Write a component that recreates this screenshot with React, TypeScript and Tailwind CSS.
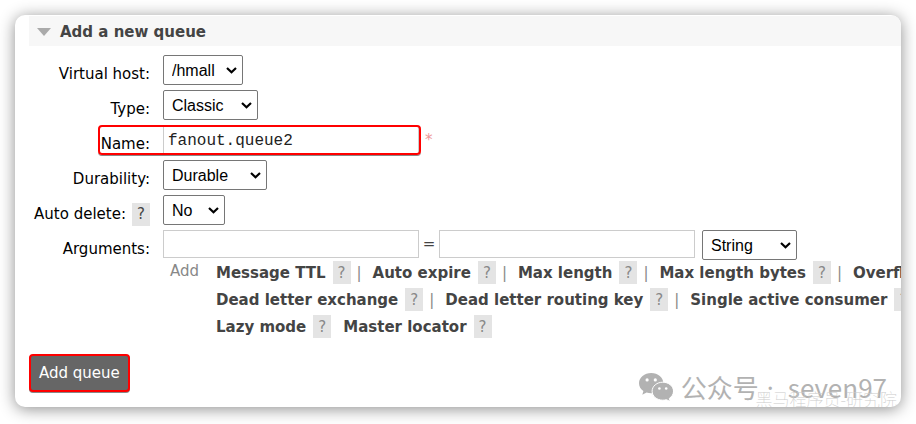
import type { ReactNode } from 'react';

type LinkItem = { label: string; divider?: boolean };

const argumentLinks: LinkItem[][] = [
  [
    { label: 'Message TTL', divider: true },
    { label: 'Auto expire', divider: true },
    { label: 'Max length', divider: true },
    { label: 'Max length bytes', divider: true },
    { label: 'Overflow behaviour' },
  ],
  [
    { label: 'Dead letter exchange', divider: true },
    { label: 'Dead letter routing key', divider: true },
    { label: 'Single active consumer' },
  ],
  [{ label: 'Lazy mode' }, { label: 'Master locator' }],
];

const inputClass =
  'h-7 w-64 border border-[#ccc] bg-white px-1 pt-px font-["Liberation_Mono","Courier_New",monospace] text-base text-[#222]';

function Select({ id, value, width, label }: { id: string; value: string; width: string; label?: string }) {
  return (
    <div className={`relative ${width}`}>
      <select
        id={id}
        aria-label={label}
        className="h-[30px] w-full appearance-none rounded-xs border border-[#767676] bg-white px-2 pt-px font-['Liberation_Sans',Arial,sans-serif] text-base text-black"
      >
        <option>{value}</option>
      </select>
      <svg
        viewBox="0 0 11 7"
        className="pointer-events-none absolute top-3 right-[6px] h-[7px] w-[11px]"
        fill="none"
        stroke="#000"
        strokeWidth="2.2"
      >
        <path d="M1 1l4.500 4.200L10 1" />
      </svg>
    </div>
  );
}

function Row({ label, htmlFor, help, children }: { label: string; htmlFor: string; help?: boolean; children: ReactNode }) {
  return (
    <div className="relative flex h-[30px] gap-[13px]">
      <div className="flex w-[121px] shrink-0 items-center justify-end gap-[6px] pt-2 whitespace-nowrap text-black">
        <label htmlFor={htmlFor}>{label}</label>
        {help && <HelpButton dark />}
      </div>
      <div className="flex shrink-0 items-start">{children}</div>
    </div>
  );
}

function HelpButton({ dark }: { dark?: boolean }) {
  return (
    <button
      type="button"
      className={`h-[23px] w-[18px] shrink-0 bg-[#e4e4e4] text-center ${dark ? 'text-[#444]' : 'text-[#888]'}`}
    >
      ?
    </button>
  );
}

function WechatIcon() {
  return (
    <svg viewBox="0 0 34 28" className="h-7 w-[34px]">
      <path
        fill="#b2b2b2"
        d="M12.200 0C5.500 0 0 4.500 0 10.200c0 3.200 1.700 6 4.400 7.900l-1.100 3.700 4.300-2.200c1.500.500 3 .700 4.600.700 6.700 0 12.200-4.500 12.200-10.100S18.900 0 12.200 0z"
      />
      <path
        fill="#b2b2b2"
        stroke="#fff"
        strokeWidth="1"
        d="M34.500 18.200c0-5-4.800-9-10.700-9s-10.700 4-10.700 9 4.800 9 10.700 9c1.300 0 2.500-.2 3.600-.500l3.900 1.900-1-3.200c2.600-1.700 4.200-4.300 4.200-7.200z"
      />
      <g fill="#fff">
        <circle cx="8.100" cy="6.900" r="1.600" />
        <circle cx="16.300" cy="6.900" r="1.600" />
        <circle cx="20.400" cy="15.500" r="1.300" />
        <circle cx="27.200" cy="15.500" r="1.300" />
      </g>
    </svg>
  );
}

export default function App() {
  return (
    <div className="bg-white px-[15px] pt-[15px] pb-[17px] font-['DejaVu_Sans',Verdana,sans-serif] text-[15px] leading-5">
      <main className="relative overflow-hidden rounded-[10px] bg-white pt-px pb-[15px] pl-[14px] shadow-[0_2px_16px_rgba(0,0,0,0.45)]">
        <h2 className="flex h-[30px] items-center gap-[9px] bg-[#f7f7f7] pl-2 pt-px font-bold text-[#444]">
          <svg viewBox="0 0 14 8" className="h-2 w-[14px]" fill="#aaa">
            <path d="M0 0h14L7 8z" />
          </svg>
          Add a new queue
        </h2>

        <form className="pt-[9px]">
          <div className="flex flex-col gap-[5px]">
            <Row label="Virtual host:" htmlFor="vhost">
              <Select id="vhost" value="/hmall" width="w-20" />
            </Row>
            <Row label="Type:" htmlFor="type">
              <Select id="type" value="Classic" width="w-[95px]" />
            </Row>
            <Row label="Name:" htmlFor="name">
              <div className="flex gap-[6px] pt-px">
                <input id="name" className={inputClass} defaultValue="fanout.queue2" />
                <span className="pt-1 text-[#e99]">*</span>
              </div>
              <span className="pointer-events-none absolute inset-y-0 left-[69px] w-[323px] rounded border-2 border-[#f00] shadow-[0_1px_0_#888]" />
            </Row>
            <Row label="Durability:" htmlFor="durability">
              <Select id="durability" value="Durable" width="w-[104px]" />
            </Row>
            <Row label="Auto delete:" htmlFor="auto-delete" help>
              <Select id="auto-delete" value="No" width="w-[62px]" />
            </Row>
            <Row label="Arguments:" htmlFor="arg-key">
              <input id="arg-key" className={inputClass} />
              <span className="w-5 pt-1 text-center text-[#444]">=</span>
              <input aria-label="Argument value" className={inputClass} />
              <div className="pl-[7px]">
                <Select id="arg-type" label="Argument type" value="String" width="w-[95px]" />
              </div>
            </Row>
          </div>

          <div className="flex pt-px pl-[141px]">
            <span className="w-[46px] shrink-0 text-[#888]">Add</span>
            <div className="flex flex-col gap-1">
              {argumentLinks.map((row) => (
                <div key={row[0].label} className="flex items-center whitespace-nowrap text-[#888]">
                  {row.map((item) => (
                    <span key={item.label} className="flex shrink-0 items-center">
                      <a href="#" className="mr-[7px] font-bold text-[#444]">{item.label}</a>
                      <HelpButton />
                      {item.divider ? <span className="w-[22px] pl-[6px]">|</span> : <span className="w-3" />}
                    </span>
                  ))}
                </div>
              ))}
            </div>
          </div>

          <button
            type="button"
            className="mt-4 h-[38px] rounded border-2 border-[#f00] bg-[#666] px-2 text-white shadow-[0_1px_0_#888]"
          >
            Add queue
          </button>
        </form>

        <div className="pointer-events-none absolute right-[14px] bottom-1 flex items-center gap-2 font-['Noto_Sans_CJK_SC',sans-serif] text-[26px] leading-8 text-[#b2b2b2]">
          <WechatIcon />
          <span>公众号</span>
          <span className="font-['Noto_Sans','Noto_Sans_CJK_SC',sans-serif]">·</span>
          <span className="pl-[6px]">seven97</span>
        </div>
        <div className="pointer-events-none absolute right-1 bottom-0 font-['Noto_Sans_CJK_SC',sans-serif] text-[17px] leading-4 font-thin text-[#ccc]">
          黑马程序员-研究院
        </div>
      </main>
    </div>
  );
}
